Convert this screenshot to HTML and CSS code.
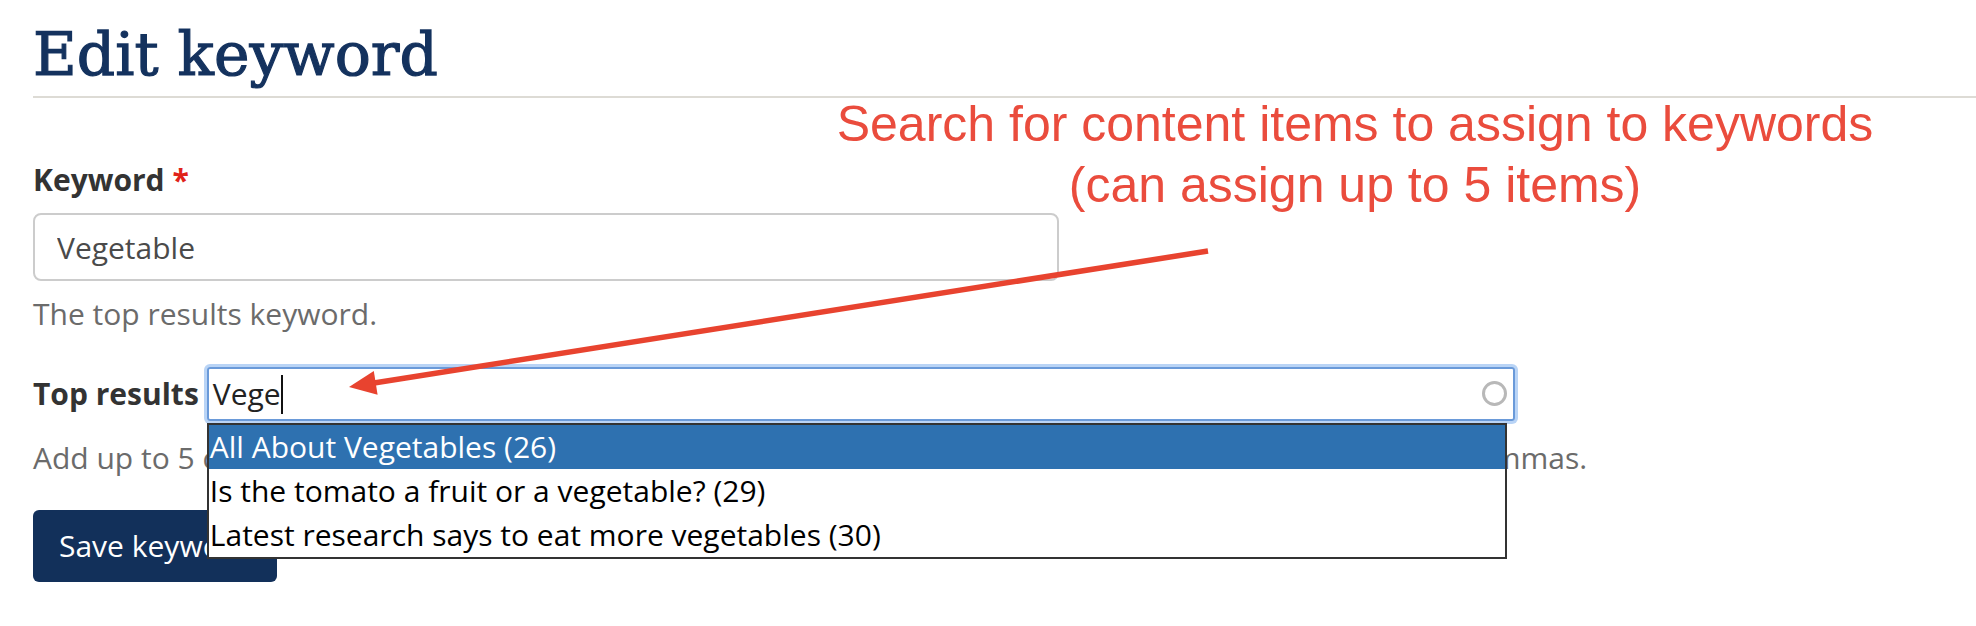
FILE: index.html
```html
<!doctype html>
<html lang="en">
	<head>
		<title>Edit keyword</title>
		<meta charset="utf-8">
		<link rel="stylesheet" href="styles.css">
	</head>

<body>

	<div class="page">

		<h1 class="page_title">Edit keyword</h1>

		<form class="keyword_form">

			<div class="form_item">
				<label class="form_label" for="edit-keyword">Keyword <span class="required">*</span></label>
				<input class="form_text" id="edit-keyword" type="text" value="Vegetable">
				<div class="description">The top results keyword.</div>
			</div>

			<div class="form_item form_item_inline">
				<div class="inline_row">
					<label class="form_label">Top results</label>
					<div class="ac_wrap">
						<div class="ac_input">Vege<span class="caret"></span></div>
						<span class="throbber"></span>
						<ul class="ac_list">
							<li class="selected">All About Vegetables (26)</li>
							<li>Is the tomato a fruit or a vegetable? (29)</li>
							<li>Latest research says to eat more vegetables (30)</li>
						</ul>
					</div>
				</div>
				<div class="description nowrap">Add up to 5 content items to show above the other search results for this keyword, each separated by commas.</div>
			</div>

			<button class="button" type="button">Save keyword</button>

		</form>

	</div>

	<!-- annotation -->

	<div class="note">
		Search for content items to assign to keywords<br>
		(can assign up to 5 items)
	</div>

	<svg class="note_arrow" width="1976" height="626" viewBox="0 0 1976 626">
		<line x1="1208" y1="251" x2="374" y2="383" stroke="#e8432f" stroke-width="5.5" />
		<polygon points="349,387 377.6,394.7 373.8,370.9" fill="#e8432f" />
	</svg>

</body>
</html>
```

FILE: styles.css
```css
body { margin: 0; background: #ffffff; font-family: "Open Sans", "Liberation Sans", sans-serif; font-size: 30px; color: #333; }

.page { padding: 14px 0 0 33px; }

.page_title {
  margin: 0;
  padding-bottom: 2px;
  border-bottom: 2px solid #dddbd5;
  font-family: "DejaVu Serif", "Liberation Serif", serif;
  font-weight: normal;
  font-size: 60px;
  line-height: 80px;
  color: #14325e;
  -webkit-text-stroke: 1.2px #14325e;
}

.form_item { margin-top: 62px; }
.form_item_inline { margin-top: 33px; }

.form_label { display: block; font-weight: bold; line-height: 40px; color: #333; margin-bottom: 13px; }
.required { color: #e0231a; }

.form_text {
  display: block;
  box-sizing: border-box;
  width: 1026px;
  height: 68px;
  margin: 0;
  padding: 0 22px;
  border: 2px solid #cccccc;
  border-radius: 8px;
  font-family: inherit;
  font-size: 30px;
  color: #4a4a4a;
  outline: none;
}

.description { line-height: 40px; color: #6b6b6b; margin-top: 13px; }
.nowrap { white-space: nowrap; margin-top: 17px; }

/* autocomplete */

.inline_row { display: flex; align-items: center; }
.inline_row .form_label { margin: 0 8px 0 0; }

.ac_wrap { position: relative; width: 1308px; }

.ac_input {
  box-sizing: border-box;
  height: 54px;
  padding: 0 4px;
  border: 2px solid #6a9ad9;
  border-radius: 3px;
  box-shadow: 0 0 0 3px #b9d4f6;
  line-height: 50px;
  color: #222;
}

.caret { display: inline-block; width: 2px; height: 39px; background: #111; vertical-align: -9px; }

.throbber {
  position: absolute;
  right: 8px; top: 14px;
  width: 19px; height: 19px;
  border: 3px solid #b8b8b8;
  border-radius: 50%;
}

.ac_list {
  position: absolute;
  top: 56px; left: 0;
  z-index: 5;
  box-sizing: border-box;
  width: 1300px;
  margin: 0;
  padding: 0;
  list-style: none;
  background: #fff;
  border: 2px solid #333;
}

.ac_list li { height: 44px; line-height: 44px; padding-left: 1px; color: #000; white-space: nowrap; }
.ac_list li.selected { background: #2e71b0; color: #fff; }

.button {
  display: block;
  margin-top: 32px;
  padding: 16px 26px;
  border: 0;
  border-radius: 6px;
  background: #12305a;
  color: #fff;
  font-family: inherit;
  font-size: 30px;
  line-height: 40px;
}

/* annotation */

.note {
  position: absolute;
  top: 94px; left: 805px;
  width: 1100px;
  z-index: 10;
  text-align: center;
  font-family: "Liberation Sans", Arial, sans-serif;
  font-size: 50px;
  line-height: 61px;
  color: #ea4c3d;
}

.note_arrow { position: absolute; top: 0; left: 0; z-index: 11; }
```
